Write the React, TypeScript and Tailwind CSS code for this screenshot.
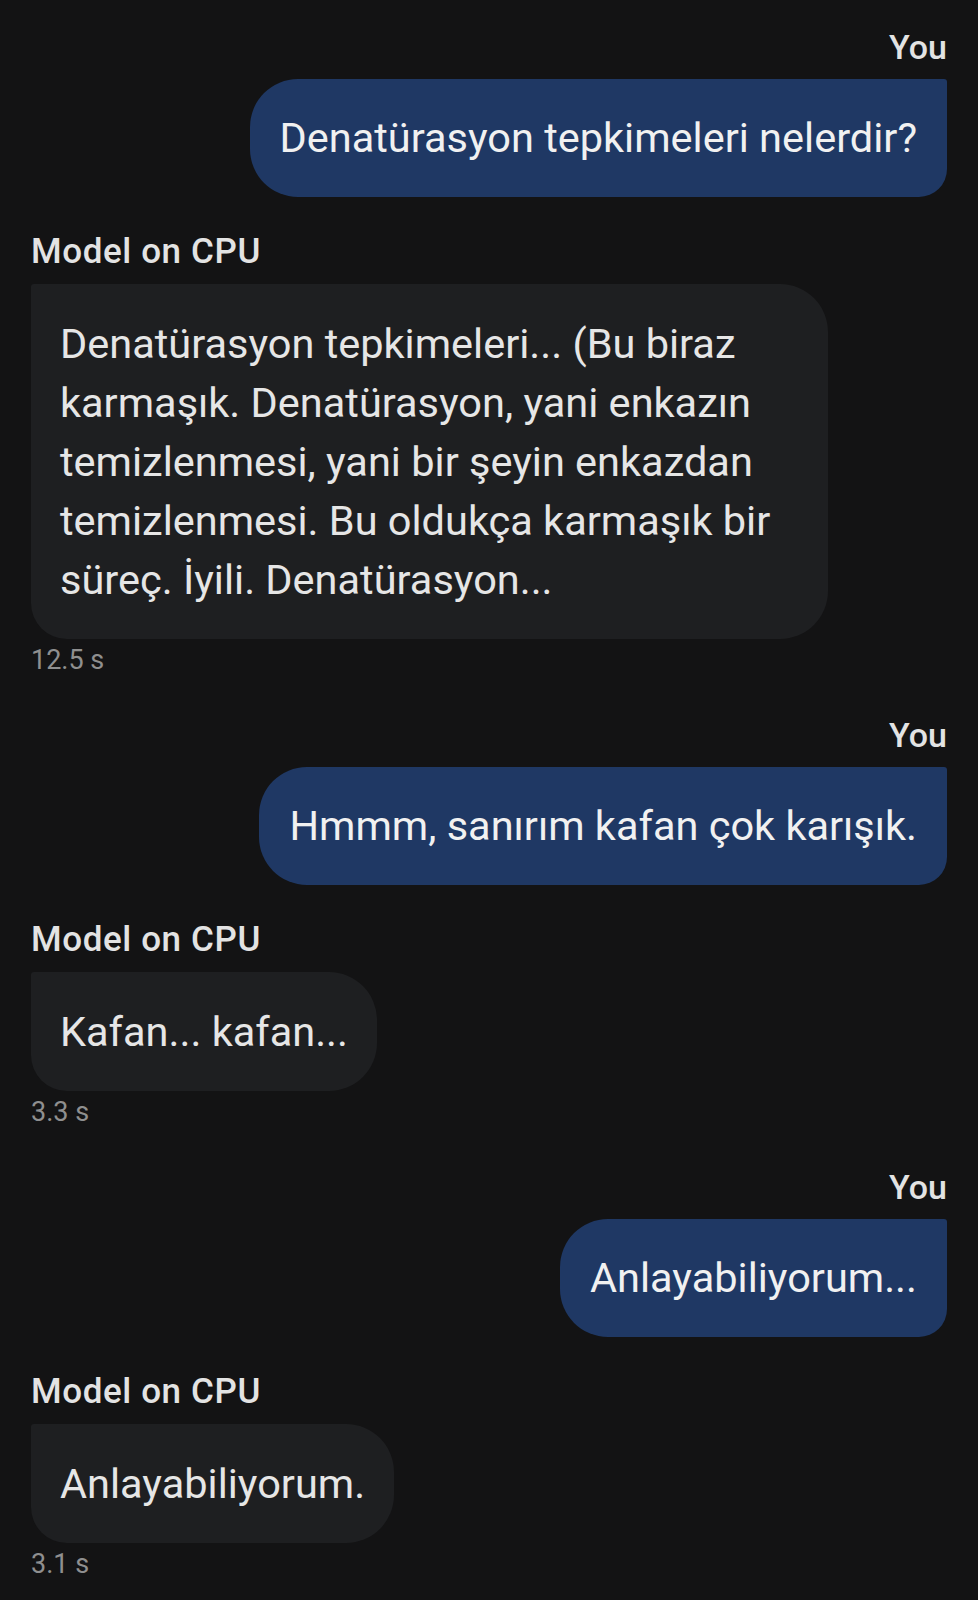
type Msg = { from: "user" | "model"; text: string; time?: string };

const messages: Msg[] = [
  { from: "user", text: "Denatürasyon tepkimeleri nelerdir?" },
  {
    from: "model",
    text: "Denatürasyon tepkimeleri... (Bu biraz karmaşık. Denatürasyon, yani enkazın temizlenmesi, yani bir şeyin enkazdan temizlenmesi. Bu oldukça karmaşık bir süreç. İyili. Denatürasyon...",
    time: "12.5 s",
  },
  { from: "user", text: "Hmmm, sanırım kafan çok karışık." },
  { from: "model", text: "Kafan... kafan...", time: "3.3 s" },
  { from: "user", text: "Anlayabiliyorum..." },
  { from: "model", text: "Anlayabiliyorum.", time: "3.1 s" },
];

function UserMessage({ text }: { text: string }) {
  return (
    <div className="flex flex-col items-end">
      <div className="text-[34px] leading-[40px] font-medium text-[#e3e3e3]">You</div>
      <div className="mt-[12px] max-w-[797px] rounded-l-[48px] rounded-tr-[3px] rounded-br-[28px] bg-[#1f3864] px-[30px] py-[29px] text-[41.5px] leading-[60px] text-[#f1f1f1]">
        {text}
      </div>
    </div>
  );
}

function ModelMessage({ text, time }: { text: string; time?: string }) {
  return (
    <div className="flex flex-col items-start">
      <div className="text-[35px] leading-[40px] font-medium tracking-[0.6px] text-[#e3e3e3]">Model on CPU</div>
      <div className="mt-[12px] max-w-[797px] rounded-r-[48px] rounded-tl-[3px] rounded-bl-[36px] bg-[#1e1f21] px-[29px] py-[30px] text-[41.5px] leading-[59px] text-[#e6e6e6]">
        {text}
      </div>
      <div className="mt-[5px] text-[27px] leading-[32px] text-[#8f8f8f]">{time}</div>
    </div>
  );
}

export default function App() {
  return (
    <div className="min-h-screen bg-[#131314] px-[31px] pt-[27px] pb-10 font-['Roboto','Liberation_Sans',sans-serif]">
      <div className="flex flex-col">
        {messages.map((m, i) => {
          const gap = i === 0 ? "" : m.from === "user" ? "mt-[39px]" : "mt-[35px]";
          return (
            <div key={i} className={gap}>
              {m.from === "user" ? (
                <UserMessage text={m.text} />
              ) : (
                <ModelMessage text={m.text} time={m.time} />
              )}
            </div>
          );
        })}
      </div>
    </div>
  );
}
